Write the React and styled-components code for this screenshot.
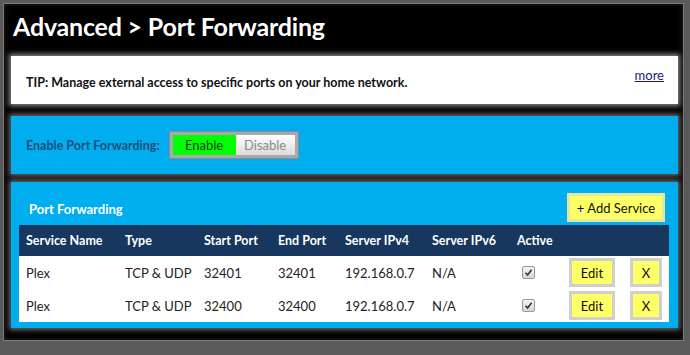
import React from 'react';
import styled, { createGlobalStyle } from 'styled-components';

const GlobalStyle = createGlobalStyle`
  html, body {
    margin: 0;
    padding: 0;
    background: #5a5a5a;
  }
  body {
    font-family: Lato, "Open Sans", sans-serif;
  }
`;

const Page = styled.div`
  width: 690px;
  height: 355px;
  box-sizing: border-box;
  padding: 3px 6px 14px 3px;
`;

const Frame = styled.div`
  height: 100%;
  box-sizing: border-box;
  background: #000;
  border: 1px solid #7a7a7a;
  box-shadow: inset 0 0 6px #222;
  padding: 0 5px 0 7px;
  display: flex;
  flex-direction: column;
`;

const Title = styled.h1`
  margin: 0;
  height: 52px;
  padding: 5px 0 0 2px;
  box-sizing: border-box;
  font-size: 25px;
  line-height: 34px;
  font-weight: 700;
  color: #fff;
  letter-spacing: -0.2px;
`;

const Tip = styled.div`
  height: 48px;
  background: #fff;
  box-shadow: 0 0 5px 2px #8a8a8a;
  display: flex;
  align-items: center;
  justify-content: space-between;
  padding: 0 14px 0 15px;
  box-sizing: border-box;
  font-size: 12.5px;
  color: #111;

  b {
    margin-top: 5px;
  }
  a {
    align-self: flex-start;
    margin-top: 11px;
    color: #1a1a7a;
    font-size: 13px;
  }
`;

const Panel = styled.section`
  background: #00aeef;
  box-shadow: 0 0 5px 2px #6a6a6a;
  margin-top: ${(p) => p.gap}px;
  height: ${(p) => p.h}px;
  box-sizing: border-box;
`;

const EnableRow = styled.div`
  display: flex;
  align-items: center;
  height: 100%;
  padding-left: 15px;
  gap: 9px;
`;

const EnableLabel = styled.span`
  font-size: 12.5px;
  font-weight: 700;
  color: #1c4e7c;
`;

const Toggle = styled.div`
  display: flex;
  padding: 3px;
  background: #a9a9a9;
  border: 1px solid #8c8c8c;
`;

const ToggleOption = styled.button`
  border: none;
  font-family: inherit;
  font-size: 13px;
  height: 20px;
  padding: 0;
  width: ${(p) => p.w}px;
  background: ${(p) => (p.on ? '#00ff00' : 'linear-gradient(#ffffff, #dcdcdc)')};
  color: ${(p) => (p.on ? '#0d3a12' : '#8a8a8a')};
`;

const PanelHead = styled.div`
  display: flex;
  align-items: center;
  justify-content: space-between;
  padding: 11px 13px 3px 18px;
`;

const PanelTitle = styled.span`
  color: #fff;
  font-weight: 700;
  font-size: 13px;
  margin-top: 2px;
`;

const YellowButton = styled.button`
  background: #ffff66;
  border: 3px solid ${(p) => p.edge};
  font-family: inherit;
  font-size: 13px;
  color: #111;
  height: ${(p) => p.h}px;
  width: ${(p) => p.w}px;
  padding: 0;
  box-sizing: border-box;
`;

const Table = styled.div`
  margin: 0 9px 0 8px;
  background: #fff;
`;

const cols = '99px 79px 74px 67px 87px 85px 52px 61px 39px';

const HeadRow = styled.div`
  display: grid;
  grid-template-columns: ${cols};
  height: 31px;
  align-items: center;
  background: #17375e;
  color: #fff;
  font-weight: 700;
  font-size: 12.5px;
  padding-left: 7px;
  box-sizing: border-box;
`;

const Row = styled.div`
  display: grid;
  grid-template-columns: ${cols};
  height: 33px;
  align-items: center;
  color: #222;
  font-size: 13px;
  padding-left: 7px;
  box-sizing: border-box;
`;

const Check = styled.span`
  width: 11px;
  height: 11px;
  margin-left: 5px;
  border: 1px solid #9a9a9a;
  border-radius: 2px;
  background: linear-gradient(#f4f4f4, #d6d6d6);
  display: flex;
  align-items: center;
  justify-content: center;
`;

const services = [
  { name: 'Plex', type: 'TCP & UDP', start: '32401', end: '32401', v4: '192.168.0.7', v6: 'N/A' },
  { name: 'Plex', type: 'TCP & UDP', start: '32400', end: '32400', v4: '192.168.0.7', v6: 'N/A' },
];

export default function App() {
  return (
    <Page>
      <GlobalStyle />
      <Frame>
        <Title>Advanced &gt; Port Forwarding</Title>
        <Tip>
          <b>TIP: Manage external access to specific ports on your home network.</b>
          <a href="#more">more</a>
        </Tip>
        <Panel gap={12} h={58}>
          <EnableRow>
            <EnableLabel>Enable Port Forwarding:</EnableLabel>
            <Toggle>
              <ToggleOption on w={63}>Enable</ToggleOption>
              <ToggleOption w={59}>Disable</ToggleOption>
            </Toggle>
          </EnableRow>
        </Panel>
        <Panel gap={8} h={146}>
          <PanelHead>
            <PanelTitle>Port Forwarding</PanelTitle>
            <YellowButton edge="#e6e6a0" w={98} h={29}>+ Add Service</YellowButton>
          </PanelHead>
          <Table>
            <HeadRow>
              <span>Service Name</span>
              <span>Type</span>
              <span>Start Port</span>
              <span>End Port</span>
              <span>Server IPv4</span>
              <span>Server IPv6</span>
              <span>Active</span>
              <span />
              <span />
            </HeadRow>
            {services.map((s, i) => (
              <Row key={i}>
                <span>{s.name}</span>
                <span>{s.type}</span>
                <span>{s.start}</span>
                <span>{s.end}</span>
                <span>{s.v4}</span>
                <span>{s.v6}</span>
                <Check>
                  <svg width="9" height="9" viewBox="0 0 9 9">
                    <path d="M1.5 4.8 L3.6 7 L7.6 1.8" fill="none" stroke="#333" strokeWidth="1.6" />
                  </svg>
                </Check>
                <YellowButton edge="#cfcfcf" w={46} h={29}>Edit</YellowButton>
                <YellowButton edge="#cfcfcf" w={32} h={29}>X</YellowButton>
              </Row>
            ))}
          </Table>
        </Panel>
      </Frame>
    </Page>
  );
}
